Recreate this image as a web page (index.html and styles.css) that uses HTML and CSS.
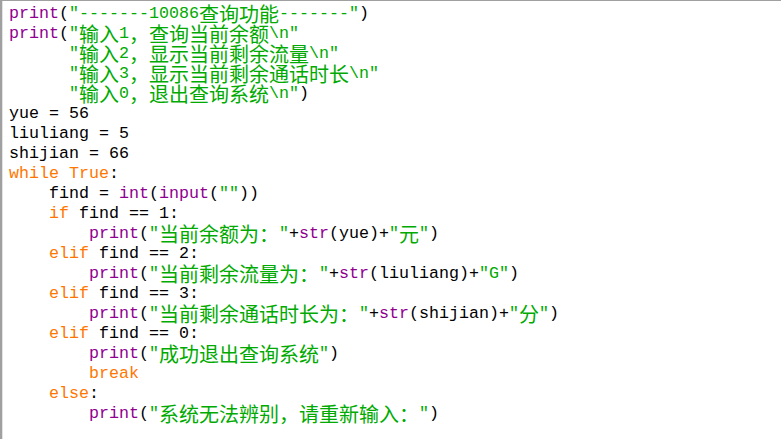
FILE: index.html
```html
<!DOCTYPE html>
<html lang="zh">
<head>
<meta charset="utf-8">
<title>10086</title>
<link rel="stylesheet" href="styles.css">
</head>
<body>
<div class="editor">
<div class="ln"><span class="b">print</span>(<span class="s">"-------10086<span class="c">查询功能</span>-------"</span>)</div>
<div class="ln"><span class="b">print</span>(<span class="s">"<span class="c">输入</span>1<span class="c">，查询当前余额</span>\n"</span></div>
<div class="ln">      <span class="s">"<span class="c">输入</span>2<span class="c">，显示当前剩余流量</span>\n"</span></div>
<div class="ln">      <span class="s">"<span class="c">输入</span>3<span class="c">，显示当前剩余通话时长</span>\n"</span></div>
<div class="ln">      <span class="s">"<span class="c">输入</span>0<span class="c">，退出查询系统</span>\n"</span>)</div>
<div class="ln">yue = 56</div>
<div class="ln">liuliang = 5</div>
<div class="ln">shijian = 66</div>
<div class="ln"><span class="k">while</span> <span class="k">True</span>:</div>
<div class="ln">    find = <span class="b">int</span>(<span class="b">input</span>(<span class="s">""</span>))</div>
<div class="ln">    <span class="k">if</span> find == 1:</div>
<div class="ln">        <span class="b">print</span>(<span class="s">"<span class="c">当前余额为：</span>"</span>+<span class="b">str</span>(yue)+<span class="s">"<span class="c">元</span>"</span>)</div>
<div class="ln">    <span class="k">elif</span> find == 2:</div>
<div class="ln">        <span class="b">print</span>(<span class="s">"<span class="c">当前剩余流量为：</span>"</span>+<span class="b">str</span>(liuliang)+<span class="s">"G"</span>)</div>
<div class="ln">    <span class="k">elif</span> find == 3:</div>
<div class="ln">        <span class="b">print</span>(<span class="s">"<span class="c">当前剩余通话时长为：</span>"</span>+<span class="b">str</span>(shijian)+<span class="s">"<span class="c">分</span>"</span>)</div>
<div class="ln">    <span class="k">elif</span> find == 0:</div>
<div class="ln">        <span class="b">print</span>(<span class="s">"<span class="c">成功退出查询系统</span>"</span>)</div>
<div class="ln">        <span class="k">break</span></div>
<div class="ln">    <span class="k">else</span>:</div>
<div class="ln">        <span class="b">print</span>(<span class="s">"<span class="c">系统无法辨别，请重新输入：</span>"</span>)</div>
</div>
</body>
</html>
```
FILE: styles.css
```css
html, body {
  margin: 0;
  padding: 0;
  background: #ffffff;
}
.editor {
  width: 781px;
  height: 439px;
  box-sizing: border-box;
  border-top: 1px solid #a0a0a0;
  border-left: 2px solid #a0a0a0;
  box-shadow: inset 1px 0 0 #e3e3e3;
  padding: 3px 0 0 7px;
  font-family: "Liberation Mono", monospace;
  font-size: 16.667px;
  color: #000000;
  overflow: hidden;
}
.ln {
  height: 20px;
  line-height: 20px;
  white-space: pre;
}
.c {
  font-family: "Noto Sans CJK SC", sans-serif;
  font-size: 20px;
  line-height: 20px;
  vertical-align: top;
}
.b { color: #900090; }
.s { color: #00aa00; }
.k { color: #ff7700; }
```
